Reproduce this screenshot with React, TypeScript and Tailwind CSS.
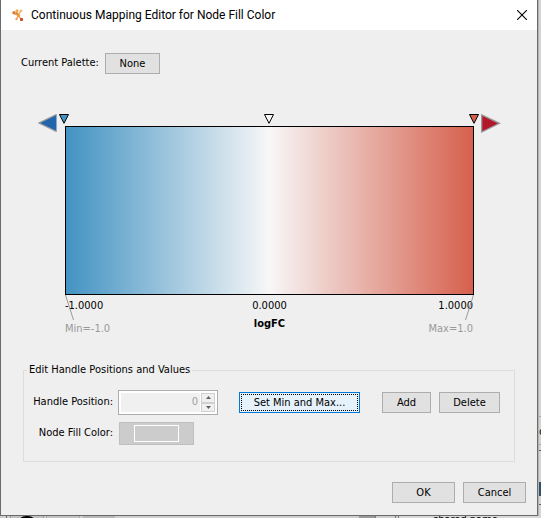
import type { ReactNode } from 'react';

const buttonBase = 'h-[21px] shrink-0 whitespace-nowrap text-center leading-[19px] border';

function PushButton({ className, children }: { className: string; children: ReactNode }) {
  return (
    <button type="button" className={`${buttonBase} border-[#adadad] bg-[#e1e1e1] ${className}`}>
      {children}
    </button>
  );
}

function Handle({ fill, className }: { fill: string; className: string }) {
  return (
    <svg width="10" height="10" viewBox="0 0 10 10" className={`absolute top-0 -translate-x-1/2 ${className}`}>
      <path d="M0.5 0.5H9.5L5 9.3Z" fill={fill} stroke="#000" strokeWidth="1" />
    </svg>
  );
}

function AppIcon() {
  return (
    <svg width="12" height="13" viewBox="0 0 12 13" aria-hidden="true">
      <path d="M2 4.5L6 6.5L9 1.5M6 6.5L4.5 10.5M6 6.5L9.5 10.5" stroke="#e9a060" strokeWidth="1.3" fill="none" />
      <circle cx="2" cy="3.8" r="1.7" fill="#dd7a30" />
      <circle cx="5" cy="1.8" r="1.5" fill="#f0a84e" />
      <circle cx="9" cy="1.8" r="1.4" fill="#f3bd6c" />
      <circle cx="4.8" cy="4.6" r="1.5" fill="#e88a35" />
      <circle cx="6.6" cy="6.4" r="1.5" fill="#f09a3a" />
      <circle cx="4.4" cy="10.2" r="1.1" fill="#e9a05a" />
      <rect x="8" y="9" width="3" height="3" rx="0.8" fill="#c9502a" />
    </svg>
  );
}

function GradientChart() {
  return (
    <section className="mt-[40px] pl-[64px] pr-[63px]">
      <div className="relative h-[12px]">
        <svg width="19" height="18" viewBox="0 0 19 18" className="absolute right-full top-0 mr-[8px]">
          <path d="M18.5 0.5L1 9L18.5 17.5Z" fill="#2166ac" />
          <path d="M18.5 0.5L1 9L18.5 17.5" fill="none" stroke="#999" strokeWidth="1.3" />
        </svg>
        <Handle fill="#4393c3" className="left-[-1px]" />
        <Handle fill="#f7f7f7" className="left-[calc(50%-1px)]" />
        <Handle fill="#d6604d" className="left-full" />
        <svg width="20" height="19" viewBox="0 0 20 19" className="absolute left-full top-0 ml-[7px]">
          <path d="M0.7 0.8L18.5 9.3L0.7 18Z" fill="#b2182b" stroke="#999" strokeWidth="1.3" />
        </svg>
      </div>
      <div className="h-[169px] border border-black bg-[linear-gradient(to_right,#4393c3,#f7f7f7,#d6604d)]" />
      <div className="relative">
        <svg width="10" height="26" viewBox="0 0 10 26" className="absolute left-0 top-0">
          <path d="M0.5 0L8.5 25" stroke="#999" fill="none" />
        </svg>
        <svg width="10" height="26" viewBox="0 0 10 26" className="absolute right-0 top-0">
          <path d="M9.5 0L1.5 25" stroke="#999" fill="none" />
        </svg>
        <div className="grid grid-cols-3 pt-[4px] leading-[14px]">
          <span>-1.0000</span>
          <span className="text-center">0.0000</span>
          <span className="pr-px text-right">1.0000</span>
        </div>
        <div className="grid grid-cols-3 pt-[4px] leading-[14px] text-[#999]">
          <span className="pt-[5px]">Min=-1.0</span>
          <span className="text-center font-bold text-black">logFC</span>
          <span className="pr-px pt-[5px] text-right">Max=1.0</span>
        </div>
      </div>
    </section>
  );
}

function Spinner() {
  return (
    <div className="flex h-[25px] w-[100px] shrink-0 border border-[#abadb3] bg-white p-[2px]">
      <input
        id="position"
        disabled
        defaultValue="0"
        className="min-w-0 flex-1 bg-[#f0f0f0] pr-[2px] text-right text-[#a0a0a0]"
      />
      <div className="ml-px flex w-[14px] flex-col">
        <button type="button" disabled aria-label="Increase" className="flex flex-1 items-center justify-center border border-[#d0d0d0] bg-[#f0f0f0]">
          <svg width="5" height="3" viewBox="0 0 5 3"><path d="M0 3L2.5 0L5 3Z" fill="#606060" /></svg>
        </button>
        <button type="button" disabled aria-label="Decrease" className="flex flex-1 items-center justify-center border border-[#d0d0d0] bg-[#f0f0f0]">
          <svg width="5" height="3" viewBox="0 0 5 3"><path d="M0 0L2.5 3L5 0Z" fill="#606060" /></svg>
        </button>
      </div>
    </div>
  );
}

export default function App() {
  return (
    <div className="flex min-h-screen flex-col overflow-hidden bg-[#cfcfcf] font-['DejaVu_Sans_Condensed','DejaVu_Sans',sans-serif] text-[11px] text-black">
      <div className="flex flex-1">
        <main className="flex flex-1 flex-col border-x border-b border-[#6b6b6b] bg-[#efefef]">
          <header className="flex h-[30px] items-center bg-white pl-[11px] pr-[10px]">
            <AppIcon />
            <h1 className="ml-[7px] flex-1 whitespace-nowrap font-[Roboto,'Open_Sans',sans-serif] text-[12px] leading-[16px]">
              Continuous Mapping Editor for Node Fill Color
            </h1>
            <button type="button" aria-label="Close">
              <svg width="10" height="10" viewBox="0 0 10 10">
                <path d="M0 0L10 10M10 0L0 10" stroke="#000" strokeWidth="1.1" />
              </svg>
            </button>
          </header>

          <div className="mt-[23px] flex items-center pl-[20px]">
            <label htmlFor="palette" className="w-[84px]">Current Palette:</label>
            <button id="palette" type="button" className={`${buttonBase} w-[55px] border-[#adadad] bg-[#e1e1e1]`}>
              None
            </button>
          </div>

          <GradientChart />

          <fieldset className="ml-[22px] mr-[22px] mt-[26px] h-[100px] border border-[#dcdcdc]">
            <legend className="ml-[3px] whitespace-nowrap px-[2px] leading-[16px]">
              Edit Handle Positions and Values
            </legend>
            <div className="mt-[12px] flex items-center pr-[14px]">
              <label htmlFor="position" className="mr-[5px] w-[89px] whitespace-nowrap text-right">
                Handle Position:
              </label>
              <Spinner />
              <button
                type="button"
                className={`${buttonBase} ml-[21px] w-[121px] border-[#0078d7] bg-[#e5f1fb] outline-1 -outline-offset-3 outline-dotted outline-black`}
              >
                Set Min and Max...
              </button>
              <div className="ml-auto flex gap-2">
                <PushButton className="w-[49px]">Add</PushButton>
                <PushButton className="w-[61px]">Delete</PushButton>
              </div>
            </div>
            <div className="mt-[7px] flex items-center">
              <label htmlFor="fill" className="mr-[6px] w-[89px] whitespace-nowrap text-right">
                Node Fill Color:
              </label>
              <button
                id="fill"
                type="button"
                disabled
                className="flex h-[23px] w-[75px] items-center justify-center border border-[#bfbfbf] bg-[#cccccc]"
              >
                <span className="h-[17px] w-[45px] border border-white" />
              </button>
            </div>
          </fieldset>

          <footer className="mb-[12px] mt-[20px] flex justify-end gap-2 pr-[11px]">
            <PushButton className="w-[63px]">OK</PushButton>
            <PushButton className="w-[63px]">Cancel</PushButton>
          </footer>
        </main>

        <aside className="flex w-[3px] flex-col overflow-hidden border-l border-[#b4b4b4] bg-[#d4d4d4]">
          <div className="mt-[416px] h-[29px] border-y border-[#a8a8a8] leading-[29px]">c</div>
          <div className="mt-[5px] h-[55px] border-y border-[#606060] pt-[31px]">
            <div className="h-[14px] bg-[#31506e]" />
          </div>
        </aside>
      </div>

      <div className="flex h-[2px] overflow-hidden bg-[#cfcfcf]">
        <div className="ml-[6px] w-[4px] border-l border-[#666]" />
        <div className="flex w-[34px] justify-center overflow-hidden border-x border-[#999] bg-[#c0c0c0]">
          <div className="h-[18px] w-[20px] shrink-0 rounded-full border-2 border-black" />
        </div>
        <div className="ml-[2px] w-[34px] border-x border-[#aaa] bg-[#c4c4c4]" />
        <div className="ml-[3px] w-[32px] bg-[#b8b8b8]" />
        <div className="ml-auto w-[17px] border-r border-[#777] bg-[#999]" />
        <div className="ml-[19px] w-[4px] border-x border-[#777]" />
        <div className="w-[142px] bg-[#d8d8d8] pl-[34px] leading-[8px]">shared name</div>
      </div>
    </div>
  );
}
